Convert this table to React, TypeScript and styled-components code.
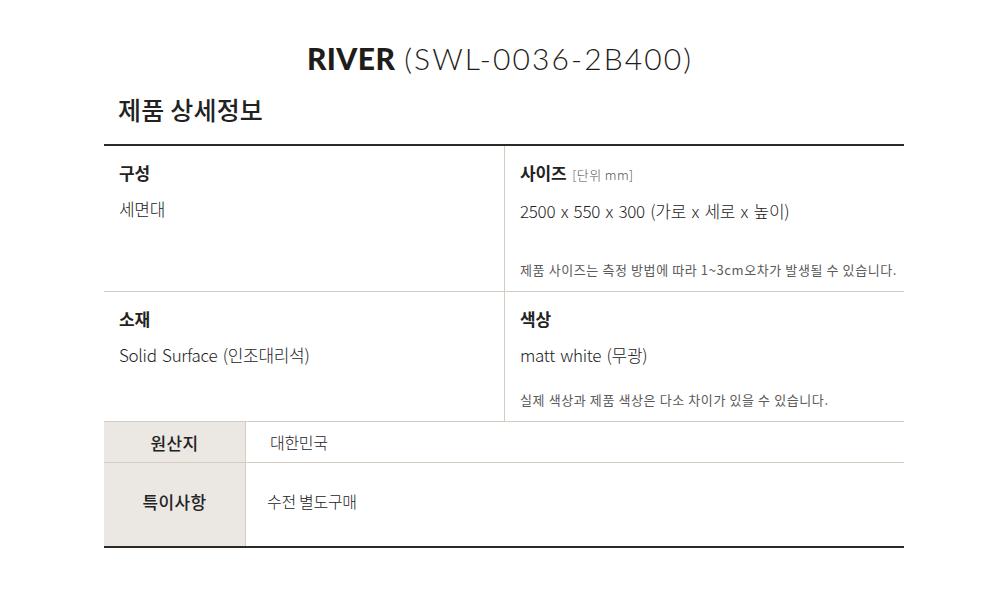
import styled, { createGlobalStyle } from 'styled-components'

const GlobalStyle = createGlobalStyle`
  html, body {
    margin: 0;
    padding: 0;
    background: #ffffff;
  }
  body {
    font-family: 'Noto Sans CJK KR', 'Noto Sans', sans-serif;
    color: #222;
  }
`

const Page = styled.div`
  width: 1000px;
  height: 597px;
  display: flex;
  flex-direction: column;
  align-items: center;
  box-sizing: border-box;
  padding-top: 38px;
`

const Title = styled.h1`
  margin: 0;
  height: 40px;
  display: flex;
  align-items: center;
  gap: 9px;
  font-family: 'Lato', 'Noto Sans', sans-serif;
  font-size: 30px;
  color: #1f1c19;
`

const TitleName = styled.span`
  font-weight: 900;
  letter-spacing: 0.4px;
`

const TitleCode = styled.span`
  font-weight: 300;
  letter-spacing: 2.1px;
`

const Section = styled.section`
  width: 800px;
  margin: 13px 0 0 8px;
`

const SectionTitle = styled.h2`
  margin: 0 0 17px 14px;
  height: 36px;
  line-height: 36px;
  font-size: 25px;
  font-weight: 500;
  color: #222;
  letter-spacing: 0.2px;
`

const Table = styled.div`
  border-top: 2px solid #2d2924;
  border-bottom: 2px solid #2d2924;
`

const SpecGrid = styled.div`
  display: grid;
  grid-template-columns: 400px 400px;
  grid-template-rows: 146px 130px;
`

const SpecCell = styled.div<{ $right?: boolean }>`
  display: flex;
  flex-direction: column;
  box-sizing: border-box;
  padding: 15px 0 12px 15px;
  border-left: ${({ $right }) => ($right ? '1px solid #d5ccc1' : 'none')};
  border-bottom: 1px solid #d5ccc1;
`

const Label = styled.div`
  font-size: 17px;
  font-weight: 700;
  line-height: 24px;
  color: #222;
  letter-spacing: -0.2px;
`

const Unit = styled.span`
  margin-left: 6px;
  font-size: 13px;
  font-weight: 300;
  color: #555;
  letter-spacing: 0.4px;
`

const Value = styled.div`
  margin-top: 12px;
  font-size: 17px;
  font-weight: 300;
  line-height: 24px;
  color: #222;
  letter-spacing: -0.3px;
  word-spacing: 2px;
`

const Note = styled.div`
  margin-top: auto;
  font-size: 13px;
  font-weight: 400;
  line-height: 18px;
  color: #5a5a5a;
  letter-spacing: 0.6px;
  white-space: nowrap;
`

const InfoRow = styled.div<{ $height: number; $lift?: number; $last?: boolean }>`
  display: grid;
  grid-template-columns: 142px 1fr;
  height: ${({ $height }) => $height}px;
  border-bottom: ${({ $last }) => ($last ? 'none' : '1px solid #d5ccc1')};

  & > * {
    padding-bottom: ${({ $lift }) => $lift ?? 0}px;
  }
`

const InfoLabel = styled.div`
  display: flex;
  align-items: center;
  justify-content: center;
  background: #ebe7e2;
  border-right: 1px solid #d5ccc1;
  font-size: 17px;
  font-weight: 500;
  color: #222;
  letter-spacing: 0.4px;
`

const InfoValue = styled.div<{ $indent: number }>`
  display: flex;
  align-items: center;
  padding-left: ${({ $indent }) => $indent}px;
  font-size: 16px;
  font-weight: 300;
  color: #222;
  letter-spacing: -0.3px;
`

export default function App() {
  return (
    <>
      <GlobalStyle />
      <Page>
        <Title>
          <TitleName>RIVER</TitleName>
          <TitleCode>(SWL-0036-2B400)</TitleCode>
        </Title>
        <Section>
          <SectionTitle>제품 상세정보</SectionTitle>
          <Table>
            <SpecGrid>
              <SpecCell>
                <Label>구성</Label>
                <Value>세면대</Value>
              </SpecCell>
              <SpecCell $right>
                <Label>
                  사이즈<Unit>[단위 mm]</Unit>
                </Label>
                <Value>2500 x 550 x 300 (가로 x 세로 x 높이)</Value>
                <Note>제품 사이즈는 측정 방법에 따라 1~3cm오차가 발생될 수 있습니다.</Note>
              </SpecCell>
              <SpecCell>
                <Label>소재</Label>
                <Value>Solid Surface (인조대리석)</Value>
              </SpecCell>
              <SpecCell $right>
                <Label>색상</Label>
                <Value>matt white (무광)</Value>
                <Note>실제 색상과 제품 색상은 다소 차이가 있을 수 있습니다.</Note>
              </SpecCell>
            </SpecGrid>
            <InfoRow $height={40}>
              <InfoLabel>원산지</InfoLabel>
              <InfoValue $indent={24}>대한민국</InfoValue>
            </InfoRow>
            <InfoRow $height={83} $lift={7} $last>
              <InfoLabel>특이사항</InfoLabel>
              <InfoValue $indent={21}>수전 별도구매</InfoValue>
            </InfoRow>
          </Table>
        </Section>
      </Page>
    </>
  )
}
